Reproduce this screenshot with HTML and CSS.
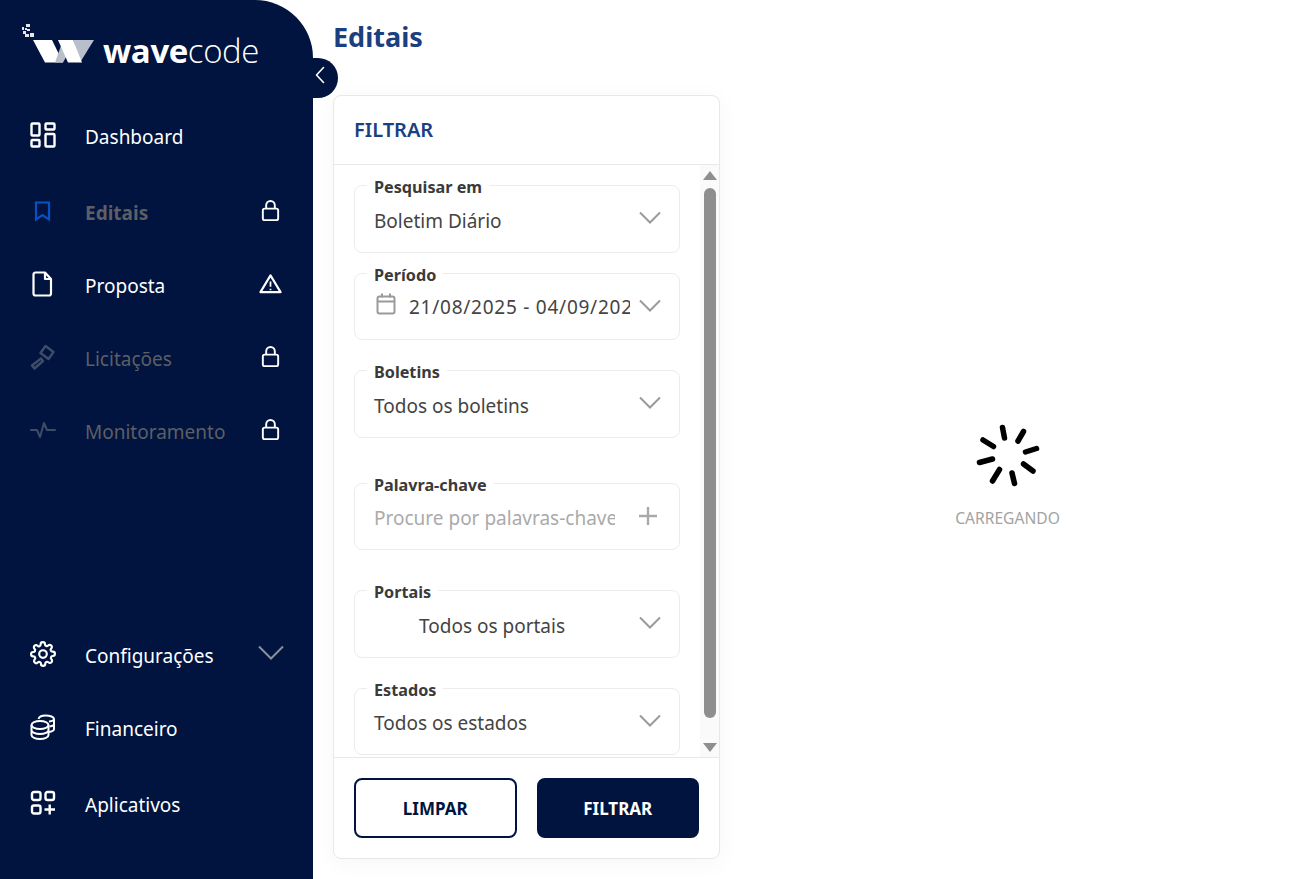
FILE: index.html
```html
<!DOCTYPE html>
<html lang="pt-BR">
<head>
  <meta charset="UTF-8">
  <title>Editais</title>
  <link rel="stylesheet" href="styles.css">
</head>
<body>
  <div class="app">
    <!-- Sidebar -->
    <aside class="sidebar">
      <button class="collapse-btn">
        <svg width="10" height="18" viewBox="0 0 10 18"><path d="M8.5 1.5 1.5 9l7 7.5" fill="none" stroke="#fff" stroke-width="1.6" stroke-linecap="round" stroke-linejoin="round"/></svg>
      </button>
      <div class="logo">
        <svg class="logo-mark" width="76" height="42" viewBox="0 0 76 42">
          <g fill="#e4e6ec">
            <rect x="0" y="3" width="2" height="3"/><rect x="4" y="0" width="4" height="3"/><rect x="3" y="4" width="2" height="2"/><rect x="1" y="7" width="3" height="3"/>
            <rect x="5" y="5" width="3" height="2"/><rect x="3" y="10" width="4" height="3"/><rect x="8" y="9" width="4" height="4"/>
          </g>
          <path d="M51 16H72L58 38.500Z" fill="#b9becb"/>
          <path d="M11 16H30L41 38.500H23Z" fill="#fff"/>
          <path d="M33 38.500H41L47 28 40 19Z" fill="#b9becb"/>
          <path d="M36 16H51L60 38.500H46Z" fill="#fff"/>
        </svg>
        <span class="logo-text"><b>wave</b>code</span>
      </div>
      <nav class="nav-top">
        <a class="nav-item nav-first">
          <svg class="nav-icon" viewBox="0 0 26 26"><g fill="none" stroke="#fff" stroke-width="2.400"><rect x="1.500" y="1.500" width="8" height="12" rx="1"/><rect x="15.500" y="1.500" width="9" height="6" rx="1"/><rect x="1.500" y="18" width="8" height="6.500" rx="1"/><rect x="15.500" y="12" width="9" height="12.500" rx="1"/></g></svg>
          <span class="nav-label">Dashboard</span>
        </a>
        <a class="nav-item">
          <svg class="nav-icon" viewBox="0 0 26 26"><path d="M6 4.500h13v17l-6.500-4.500-6.500 4.500z" fill="none" stroke="#0652c5" stroke-width="2.200"/></svg>
          <span class="nav-label nav-bold dim">Editais</span>
          <svg class="nav-side" viewBox="0 0 20 24"><g fill="none" stroke="#fff" stroke-width="2"><rect x="2" y="10" width="16" height="12" rx="2"/><path d="M5.500 10V6.500a4.500 4.500 0 0 1 9 0V10"/></g></svg>
        </a>
        <a class="nav-item">
          <svg class="nav-icon" viewBox="0 0 26 26"><path d="M5.500 1.500h9.500l6 6.500v14.500a2 2 0 0 1-2 2H5.500a2 2 0 0 1-2-2v-19a2 2 0 0 1 2-2zM15 1.500V8h6" fill="none" stroke="#fff" stroke-width="2.200" stroke-linejoin="round"/></svg>
          <span class="nav-label">Proposta</span>
          <svg class="nav-side" viewBox="0 0 24 24"><path d="M12 3.500 22.500 21h-21z" fill="none" stroke="#fff" stroke-width="2.200" stroke-linejoin="round"/><path d="M12 10v5.500M12 17.500v1.500" stroke="#fff" stroke-width="1.800"/></svg>
        </a>
        <a class="nav-item">
          <svg class="nav-icon" viewBox="0 0 26 26"><g fill="none" stroke="#3f4c68" stroke-width="2.400"><path d="M2 21.500 11 14.500l2 2.500-8.500 7.500z" stroke-linejoin="round"/><path d="M10.500 9 15.500 2l8 6-5 7z" stroke-linejoin="round"/></g></svg>
          <span class="nav-label dim">Licitações</span>
          <svg class="nav-side" viewBox="0 0 20 24"><g fill="none" stroke="#fff" stroke-width="2"><rect x="2" y="10" width="16" height="12" rx="2"/><path d="M5.500 10V6.500a4.500 4.500 0 0 1 9 0V10"/></g></svg>
        </a>
        <a class="nav-item">
          <svg class="nav-icon" viewBox="0 0 26 26"><path d="M1 13h6l3 7 4-14 3 7h8" fill="none" stroke="#3f4c68" stroke-width="2" stroke-linejoin="round" stroke-linecap="round"/></svg>
          <span class="nav-label dim">Monitoramento</span>
          <svg class="nav-side" viewBox="0 0 20 24"><g fill="none" stroke="#fff" stroke-width="2"><rect x="2" y="10" width="16" height="12" rx="2"/><path d="M5.500 10V6.500a4.500 4.500 0 0 1 9 0V10"/></g></svg>
        </a>
      </nav>
      <nav class="nav-bottom">
        <a class="nav-item">
          <svg class="nav-icon" viewBox="0 0 24 24"><g fill="none" stroke="#fff" stroke-width="2" stroke-linejoin="round"><circle cx="12" cy="12" r="3.500"/><path d="M19.400 15a1.650 1.650 0 0 0 .33 1.820l.06.06a2 2 0 1 1-2.830 2.830l-.06-.06a1.650 1.650 0 0 0-2.800 1.170V21a2 2 0 0 1-4 0v-.09a1.650 1.650 0 0 0-2.880-1.110l-.06.06a2 2 0 1 1-2.830-2.830l.06-.06a1.650 1.650 0 0 0-1.170-2.800H3a2 2 0 0 1 0-4h.09A1.650 1.650 0 0 0 4.200 7.290l-.06-.06a2 2 0 1 1 2.830-2.830l.06.06a1.650 1.650 0 0 0 2.800-1.170V3a2 2 0 0 1 4 0v.09a1.650 1.650 0 0 0 2.880 1.110l.06-.06a2 2 0 1 1 2.830 2.830l-.06.06a1.650 1.650 0 0 0 1.170 2.800H21a2 2 0 0 1 0 4h-.09a1.650 1.650 0 0 0-1.510 1.170z"/></g></svg>
          <span class="nav-label">Configurações</span>
          <svg class="nav-chevron" viewBox="0 0 26 14"><path d="M1 1l12 12L25 1" fill="none" stroke="#8a8f9c" stroke-width="2"/></svg>
        </a>
        <a class="nav-item">
          <svg class="nav-icon" viewBox="0 0 26 26"><g fill="none" stroke="#fff" stroke-width="2"><ellipse cx="10" cy="11" rx="8.500" ry="4"/><path d="M1.500 11v10c0 2.200 3.800 4 8.500 4s8.500-1.800 8.500-4V11M1.500 16c0 2.200 3.800 4 8.500 4s8.500-1.800 8.500-4"/><path d="M8.500 5c.5-2 3.500-3.500 7-3.500 4.700 0 8.500 1.500 8.500 3.500v10c0 1.300-2 2.500-5.500 3M19 7.500c2.600-.3 5-1.200 5-2.500M19.500 12.500c2.300-.4 4.500-1.200 4.500-2.500"/></g></svg>
          <span class="nav-label">Financeiro</span>
        </a>
        <a class="nav-item">
          <svg class="nav-icon" viewBox="0 0 26 26"><g fill="none" stroke="#fff" stroke-width="2.400"><rect x="2" y="2" width="8.500" height="8" rx="2"/><rect x="15.500" y="2" width="8.500" height="8" rx="2"/><rect x="2" y="15.500" width="8.500" height="8" rx="2"/><path d="M14.500 19.500h10.500M19.700 14.500v10"/></g></svg>
          <span class="nav-label">Aplicativos</span>
        </a>
      </nav>
    </aside>

    <!-- Main Section -->
    <main class="content">
      <h1 class="page-title">Editais</h1>
      <div class="content-row">
        <section class="filter-card">
          <div class="filter-header">FILTRAR</div>
          <div class="filter-body">
            <div class="filter-fields">
              <div class="field f-search">
                <label>Pesquisar em</label>
                <span class="field-value">Boletim Diário</span>
                <svg class="chevron" viewBox="0 0 22 13"><path d="M1 1.500l10 10 10-10" fill="none" stroke="#9a9a9a" stroke-width="2"/></svg>
              </div>
              <div class="field f-period">
                <label>Período</label>
                <svg class="calendar" viewBox="0 0 20 22"><g fill="none" stroke="#9a9a9a" stroke-width="2"><rect x="1.500" y="3.500" width="17" height="17" rx="2"/><path d="M1.500 8.500h17M6 .5v4M14 .5v4"/></g></svg>
                <span class="field-value clip">21/08/2025 - 04/09/2025</span>
                <svg class="chevron" viewBox="0 0 22 13"><path d="M1 1.500l10 10 10-10" fill="none" stroke="#9a9a9a" stroke-width="2"/></svg>
              </div>
              <div class="field f-bulletin">
                <label>Boletins</label>
                <span class="field-value">Todos os boletins</span>
                <svg class="chevron" viewBox="0 0 22 13"><path d="M1 1.500l10 10 10-10" fill="none" stroke="#9a9a9a" stroke-width="2"/></svg>
              </div>
              <div class="field f-keyword">
                <label>Palavra-chave</label>
                <span class="field-value clip placeholder">Procure por palavras-chave</span>
                <svg class="plus" viewBox="0 0 18 18"><path d="M9 0v18M0 9h18" stroke="#aaa" stroke-width="2.400"/></svg>
              </div>
              <div class="field f-portal">
                <label>Portais</label>
                <span class="field-value indent">Todos os portais</span>
                <svg class="chevron" viewBox="0 0 22 13"><path d="M1 1.500l10 10 10-10" fill="none" stroke="#9a9a9a" stroke-width="2"/></svg>
              </div>
              <div class="field f-state">
                <label>Estados</label>
                <span class="field-value">Todos os estados</span>
                <svg class="chevron" viewBox="0 0 22 13"><path d="M1 1.500l10 10 10-10" fill="none" stroke="#9a9a9a" stroke-width="2"/></svg>
              </div>
            </div>
            <div class="scrollbar">
              <span class="arrow-up"></span>
              <span class="thumb"></span>
              <span class="arrow-down"></span>
            </div>
          </div>
          <div class="filter-footer">
            <button class="btn btn-outline">LIMPAR</button>
            <button class="btn btn-solid">FILTRAR</button>
          </div>
        </section>
        <div class="loader">
          <svg class="spinner" width="64" height="64" viewBox="0 0 64 64">
            <g stroke="#000" stroke-width="5.500" stroke-linecap="round">
              <path d="M26.500 4.500 28.500 15"/><path d="M47.500 8.500 42 18"/><path d="M60.500 25.500 49.500 29"/><path d="M57 48 47.500 41"/>
              <path d="M38.500 60.500 36 50"/><path d="M16.500 58 23.500 46.500"/><path d="M3.500 39.500 16.500 36"/><path d="M7 17 17.500 23.500"/>
            </g>
          </svg>
          <span class="loader-text">CARREGANDO</span>
        </div>
      </div>
    </main>
  </div>
</body>
</html>
```

FILE: styles.css
```css
* {
  box-sizing: border-box;
}

body {
  margin: 0;
  font-family: "Noto Sans", "Open Sans", sans-serif;
  background-color: #fff;
  color: #333;
}

.app {
  display: flex;
  height: 879px;
  overflow: hidden;
}

/* Sidebar */
.sidebar {
  position: relative;
  width: 313px;
  flex-shrink: 0;
  background-color: #00143f;
  border-top-right-radius: 58px;
  display: flex;
  flex-direction: column;
  justify-content: space-between;
  color: #fff;
}

.collapse-btn {
  position: absolute;
  top: 58px;
  left: 313px;
  width: 25px;
  height: 40px;
  padding: 0 0 6px 2px;
  border: none;
  border-radius: 0 20px 20px 0;
  background-color: #00143f;
  display: flex;
  align-items: center;
  justify-content: flex-start;
}

.logo {
  height: 100px;
  padding: 24px 0 0 22px;
  display: flex;
  align-items: flex-start;
}

.logo-mark {
  flex-shrink: 0;
}

.logo-text {
  margin: 9px 0 0 5px;
  font-family: "Open Sans", sans-serif;
  font-size: 33px;
  line-height: 36px;
  font-weight: 300;
  letter-spacing: -0.4px;
}

.logo-text b {
  font-weight: 700;
}

.nav-top {
  flex: 1;
}

.nav-bottom {
  padding-bottom: 38px;
}

.nav-item {
  height: 73px;
  padding-left: 30px;
  display: flex;
  align-items: center;
}

.nav-first {
  margin-bottom: 3px;
}

.nav-bottom .nav-item:nth-child(2) {
  margin-bottom: 3px;
}

.nav-icon {
  width: 26px;
  height: 26px;
  margin-top: -4px;
  flex-shrink: 0;
}

.nav-label {
  margin-left: 29px;
  font-size: 19px;
  color: #fff;
}

.nav-bold {
  font-weight: 700;
}

.dim {
  color: #5d5f65;
}

.nav-side {
  position: absolute;
  left: 259px;
  width: 23px;
  height: 23px;
  margin-top: -4px;
}

.nav-chevron {
  position: absolute;
  left: 258px;
  width: 26px;
  height: 15px;
  margin-top: -6px;
}

/* Main */
.content {
  flex: 1;
  padding: 0 0 20px 20px;
  display: flex;
  flex-direction: column;
}

.page-title {
  margin: 0;
  height: 95px;
  padding-top: 16px;
  font-size: 27px;
  line-height: 42px;
  font-weight: 700;
  color: #1a4080;
}

.content-row {
  flex: 1;
  display: flex;
  min-height: 0;
}

.filter-card {
  width: 387px;
  background-color: #fff;
  border: 1px solid #e8e8e8;
  border-radius: 8px;
  box-shadow: 0 4px 24px rgba(0, 0, 0, 0.04);
  display: flex;
  flex-direction: column;
}

.filter-header {
  height: 69px;
  padding: 0 0 2px 20px;
  border-bottom: 1px solid #e8e8e8;
  display: flex;
  align-items: center;
  font-size: 20px;
  font-weight: 600;
  color: #1a4080;
}

.filter-body {
  flex: 1;
  min-height: 0;
  display: flex;
  overflow: hidden;
}

.filter-fields {
  width: 366px;
  padding: 20px 0 0 20px;
}

.field {
  position: relative;
  width: 326px;
  height: 68px;
  border: 1px solid #ececec;
  border-radius: 8px;
  display: flex;
  align-items: center;
  padding: 3px 40px 0 19px;
}

.f-period {
  height: 67px;
  margin-top: 20px;
  padding: 0 49px 0 18px;
}

.f-bulletin {
  margin-top: 30px;
}

.f-keyword {
  height: 67px;
  margin-top: 45px;
  padding: 2px 64px 0 19px;
}

.f-portal {
  margin-top: 40px;
}

.f-state {
  height: 67px;
  margin-top: 30px;
  padding-top: 2px;
}

.field label {
  position: absolute;
  top: -9px;
  left: 12px;
  padding: 0 7px;
  background-color: #fff;
  font-size: 16.2px;
  line-height: 20px;
  font-weight: 700;
  color: #3a3a3a;
}

.field-value {
  font-size: 19px;
  color: #444;
  white-space: nowrap;
}

.clip {
  flex: 1;
  overflow: hidden;
}

.indent {
  margin-left: 45px;
}

.f-period .field-value {
  margin-left: 13px;
  letter-spacing: 0.75px;
}

.placeholder {
  color: #aaa;
}

.calendar {
  width: 20px;
  height: 22px;
  margin: -6px 0 0 3px;
  flex-shrink: 0;
}

.chevron {
  position: absolute;
  top: 25px;
  left: 284px;
  width: 22px;
  height: 13px;
}

.plus {
  position: absolute;
  top: 23px;
  left: 284px;
  width: 18px;
  height: 18px;
}

/* fake scrollbar, the page never scrolls here */
.scrollbar {
  width: 19px;
  background-color: #fafafa;
  padding: 6px 2px 5px 3px;
  display: flex;
  flex-direction: column;
  align-items: center;
}

.arrow-up {
  border-left: 7px solid transparent;
  border-right: 7px solid transparent;
  border-bottom: 9px solid #8e8e8e;
}

.thumb {
  flex: 1;
  width: 12px;
  margin: 8px 0 25px;
  border-radius: 6px;
  background-color: #8e8e8e;
}

.arrow-down {
  border-left: 7px solid transparent;
  border-right: 7px solid transparent;
  border-top: 9px solid #8e8e8e;
}

.filter-footer {
  height: 101px;
  padding: 20px;
  border-top: 1px solid #e8e8e8;
  display: flex;
  gap: 20px;
}

.btn {
  width: 163px;
  height: 60px;
  border-radius: 8px;
  border: 2px solid #00143f;
  font-family: inherit;
  font-size: 17px;
  font-weight: 700;
}

.btn-outline {
  background-color: #fff;
  color: #00143f;
}

.btn-solid {
  background-color: #00143f;
  color: #fff;
}

/* Loader */
.loader {
  flex: 1;
  padding-top: 2px;
  display: flex;
  flex-direction: column;
  align-items: center;
  justify-content: center;
  gap: 20px;
}

.spinner {
  margin-top: -4px;
}

.loader-text {
  font-size: 15.6px;
  color: #a3a3a3;
}
```
